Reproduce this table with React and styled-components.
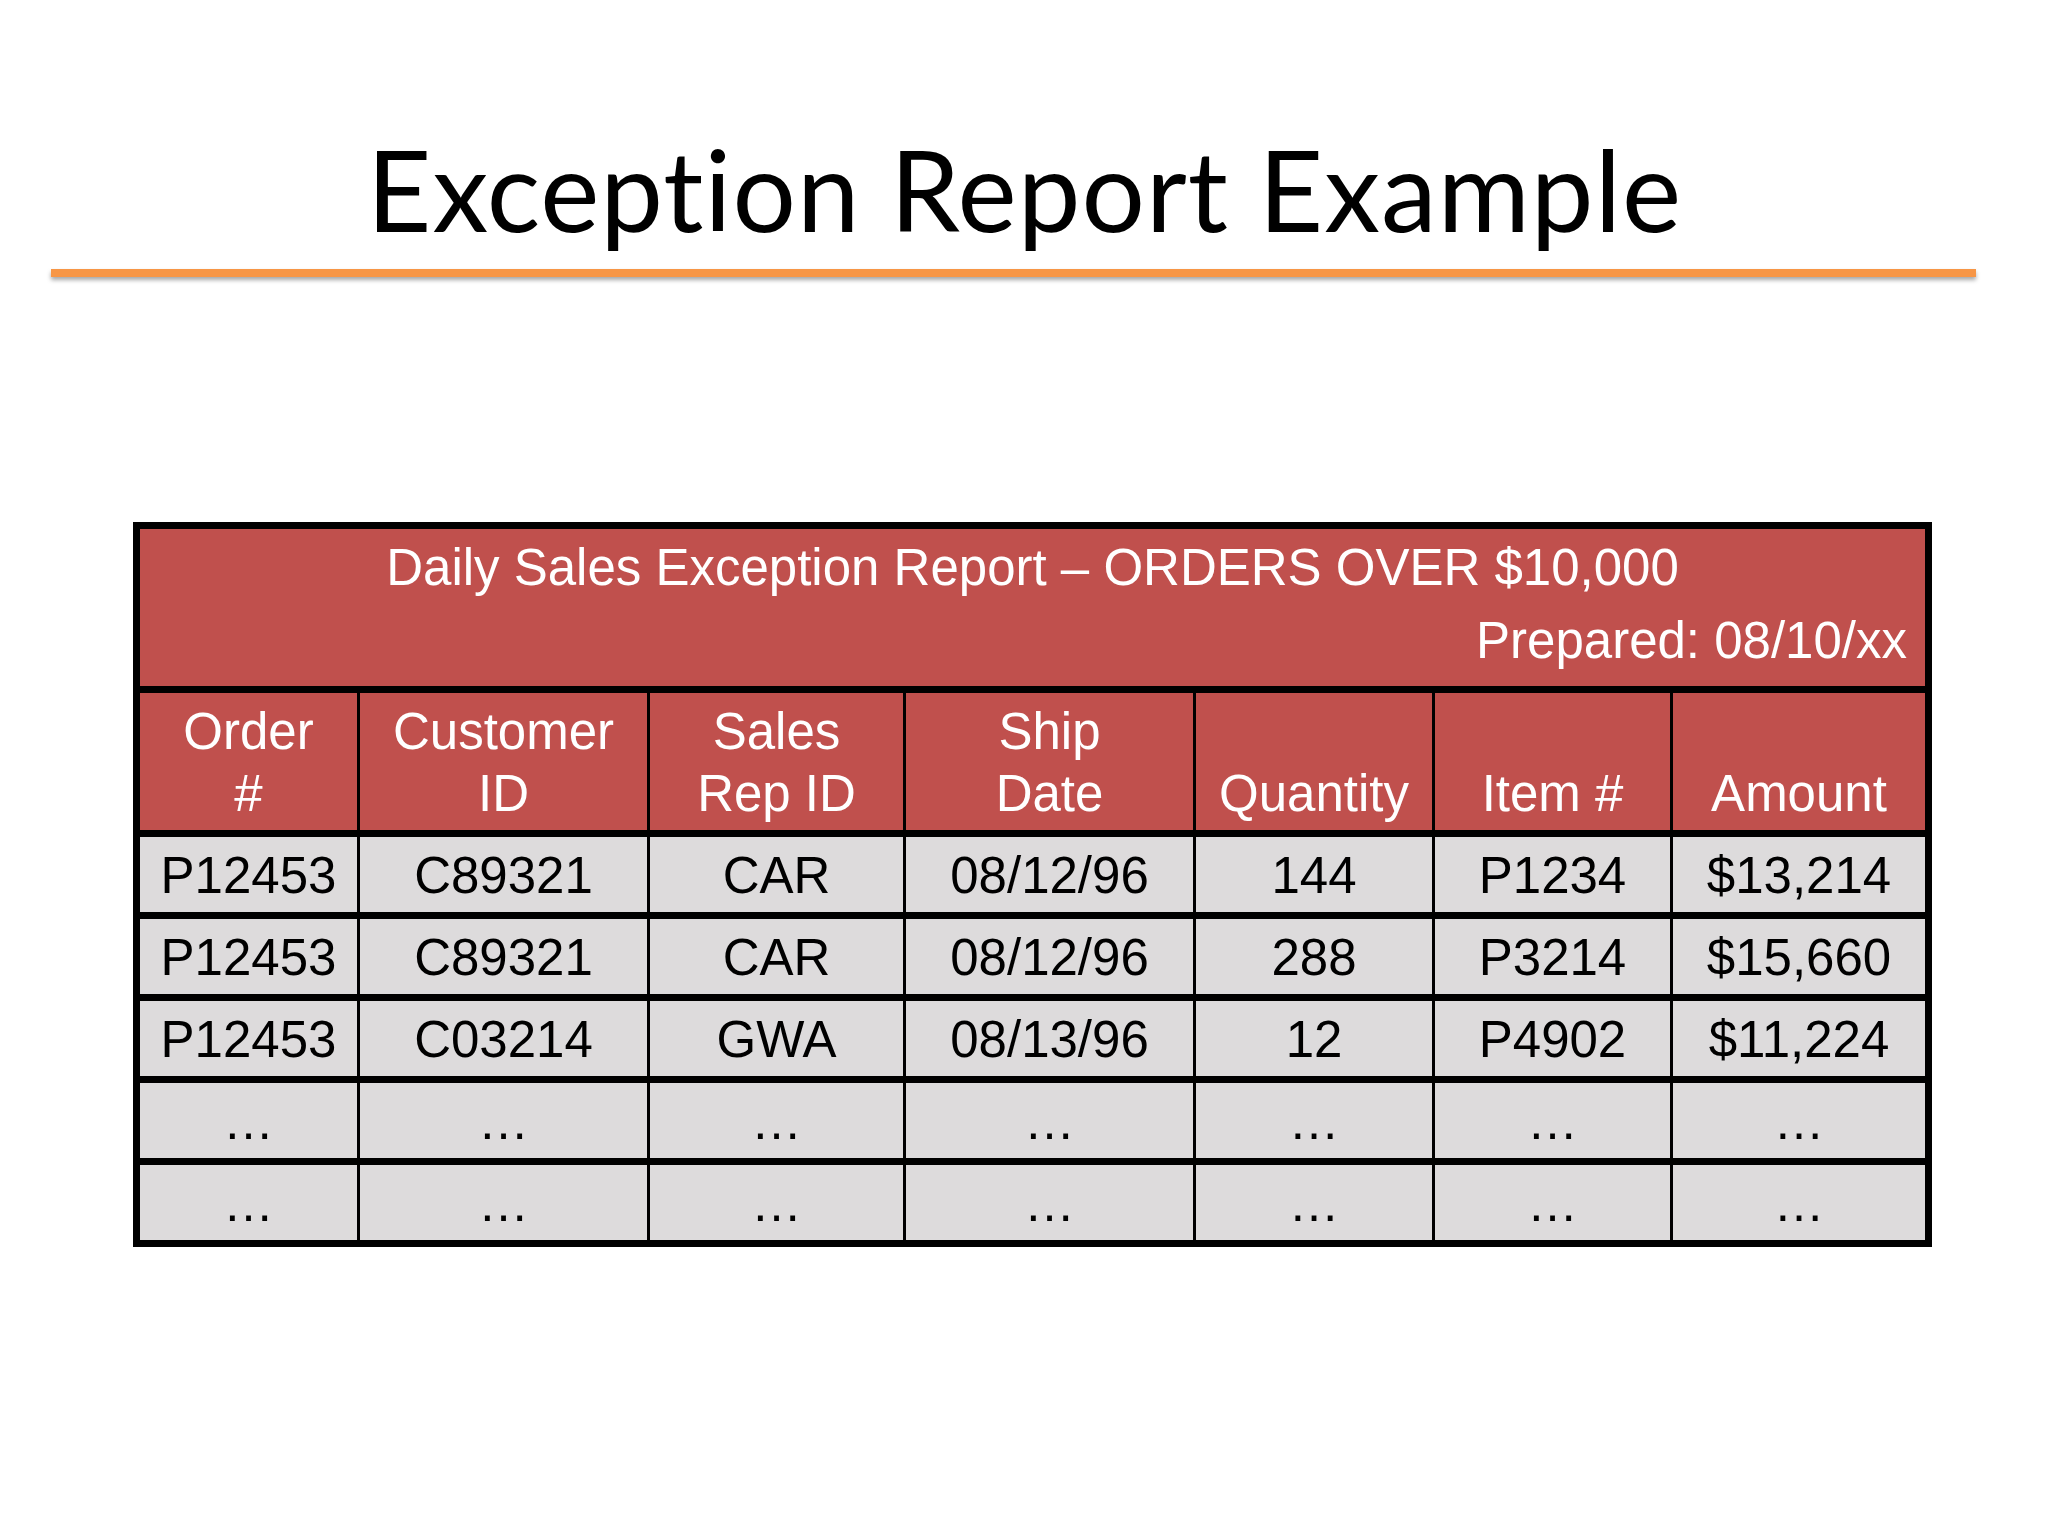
import styled, { createGlobalStyle } from "styled-components";

const GlobalStyle = createGlobalStyle`
  html, body {
    margin: 0;
    padding: 0;
    background: #fff;
  }
`;

const Slide = styled.div`
  width: 2048px;
  height: 1536px;
  background: #fff;
  display: flex;
  flex-direction: column;
`;

const Header = styled.header`
  display: flex;
  flex-direction: column;
  padding: 133px 72px 0 51px;
`;

const Title = styled.h1`
  margin: 0;
  font-family: Lato, "Open Sans", sans-serif;
  font-weight: 400;
  font-size: 112px;
  line-height: 112px;
  letter-spacing: 1px;
  font-variant-ligatures: none;
  font-feature-settings: "liga" 0, "clig" 0;
  color: #000;
  text-align: center;
  padding-left: 22px;
`;

const Rule = styled.div`
  margin-top: 24px;
  height: 8px;
  background: #f79646;
  box-shadow: 0 3px 4px rgba(0, 0, 0, 0.35);
`;

const Body = styled.main`
  padding: 245px 0 0 133px;
`;

const Grid = styled.div`
  display: grid;
  grid-template-columns: 217px 287px 253px 287px 236px 235px 252px;
  grid-template-rows: 157px 137px repeat(5, 75px);
  column-gap: 3px;
  row-gap: 7px;
  padding: 7px;
  width: max-content;
  background: #000;
  font-family: "Liberation Sans", Arial, sans-serif;
  font-size: 51px;
`;

const Banner = styled.div`
  grid-column: 1 / -1;
  background: #c0504d;
  color: #fff;
  display: flex;
  flex-direction: column;
  padding: 2px 18px 0;
  line-height: 73px;
`;

const BannerTitle = styled.div`
  text-align: center;
`;

const BannerDate = styled.div`
  text-align: right;
`;

const HeadCell = styled.div`
  background: #c0504d;
  color: #fff;
  display: flex;
  flex-direction: column;
  justify-content: flex-end;
  align-items: center;
  text-align: center;
  line-height: 62px;
  padding-bottom: 5px;
`;

const Cell = styled.div`
  background: #dddbdc;
  color: #000;
  display: flex;
  align-items: center;
  justify-content: center;
  line-height: 75px;
  padding-top: 2px;
  white-space: nowrap;
`;

const columns = [
  ["Order", "#"],
  ["Customer", "ID"],
  ["Sales", "Rep ID"],
  ["Ship", "Date"],
  ["Quantity"],
  ["Item #"],
  ["Amount"],
];

const rows = [
  ["P12453", "C89321", "CAR", "08/12/96", "144", "P1234", "$13,214"],
  ["P12453", "C89321", "CAR", "08/12/96", "288", "P3214", "$15,660"],
  ["P12453", "C03214", "GWA", "08/13/96", "12", "P4902", "$11,224"],
  ["…", "…", "…", "…", "…", "…", "…"],
  ["…", "…", "…", "…", "…", "…", "…"],
];

export default function App() {
  return (
    <Slide>
      <GlobalStyle />
      <Header>
        <Title>Exception Report Example</Title>
        <Rule />
      </Header>
      <Body>
        <Grid>
          <Banner>
            <BannerTitle>
              Daily Sales Exception Report – ORDERS OVER $10,000
            </BannerTitle>
            <BannerDate>Prepared: 08/10/xx</BannerDate>
          </Banner>
          {columns.map((lines, i) => (
            <HeadCell key={i}>
              {lines.map((l) => (
                <span key={l}>{l}</span>
              ))}
            </HeadCell>
          ))}
          {rows.map((row, r) =>
            row.map((v, c) => <Cell key={`${r}-${c}`}>{v}</Cell>)
          )}
        </Grid>
      </Body>
    </Slide>
  );
}
